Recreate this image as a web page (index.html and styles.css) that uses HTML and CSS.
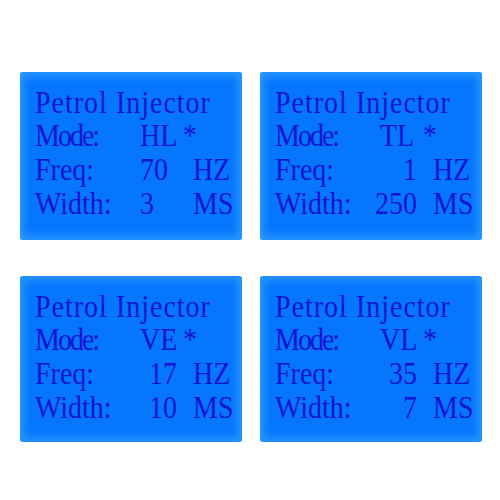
FILE: index.html
```html
<html>
  <head>
    <title>Petrol Injector modes</title>
    <link rel="stylesheet" href="styles.css">
  </head>
  <body>
    <div class="board">
      <div class="lcd">
        <div class="screen">
          <div class="title">Petrol Injector</div>
          <div class="row"><span class="label tight">Mode:</span><span class="mode">HL</span><span class="star">*</span></div>
          <div class="row"><span class="label">Freq:</span><span class="value left">70</span><span class="unit">HZ</span></div>
          <div class="row"><span class="label">Width:</span><span class="value left">3</span><span class="unit">MS</span></div>
        </div>
      </div>
      <div class="lcd">
        <div class="screen">
          <div class="title">Petrol Injector</div>
          <div class="row"><span class="label tight">Mode:</span><span class="mode">TL</span><span class="star">*</span></div>
          <div class="row"><span class="label">Freq:</span><span class="value">1</span><span class="unit">HZ</span></div>
          <div class="row"><span class="label">Width:</span><span class="value">250</span><span class="unit">MS</span></div>
        </div>
      </div>
      <div class="lcd">
        <div class="screen">
          <div class="title">Petrol Injector</div>
          <div class="row"><span class="label tight">Mode:</span><span class="mode">VE</span><span class="star">*</span></div>
          <div class="row"><span class="label">Freq:</span><span class="value">17</span><span class="unit">HZ</span></div>
          <div class="row"><span class="label">Width:</span><span class="value">10</span><span class="unit">MS</span></div>
        </div>
      </div>
      <div class="lcd">
        <div class="screen">
          <div class="title">Petrol Injector</div>
          <div class="row"><span class="label tight">Mode:</span><span class="mode">VL</span><span class="star">*</span></div>
          <div class="row"><span class="label">Freq:</span><span class="value">35</span><span class="unit">HZ</span></div>
          <div class="row"><span class="label">Width:</span><span class="value">7</span><span class="unit">MS</span></div>
        </div>
      </div>
    </div>
  </body>
</html>
```

FILE: styles.css
```css
body {
  margin: 0;
  background: white;
}
.board {
  display: grid;
  grid-template-columns: 222px 222px;
  grid-template-rows: 168px 166px;
  column-gap: 18px;
  row-gap: 36px;
  padding-top: 72px;
  padding-left: 20px;
}
.lcd {
  background-color: #0676fc;
  border-radius: 3px;
  box-shadow: inset 0 0 8px 4px rgba(50, 160, 255, 0.8);
  padding: 14px 0 0 15px;
  font-family: "Liberation Serif", serif;
  font-size: 28px;
  color: #1414d4;
  line-height: 30px;
}
/* the display glyphs are a bit taller than the font */
.screen {
  transform: scaleY(1.12);
  transform-origin: top left;
}
.title {
  letter-spacing: 1px;
}
.row {
  display: grid;
  grid-template-columns: 100px 42px 16px auto;
}
.row .label {
  grid-column: 1;
}
.row .label.tight {
  letter-spacing: -2px;
}
.row .mode {
  grid-column: 2 / 4;
  margin-left: 5px;
}
.row .star {
  grid-column: 4;
  margin-left: -10px;
}
.row .value {
  grid-column: 2;
  text-align: right;
}
.row .value.left {
  text-align: left;
  margin-left: 5px;
}
.row .unit {
  grid-column: 4;
}
```
